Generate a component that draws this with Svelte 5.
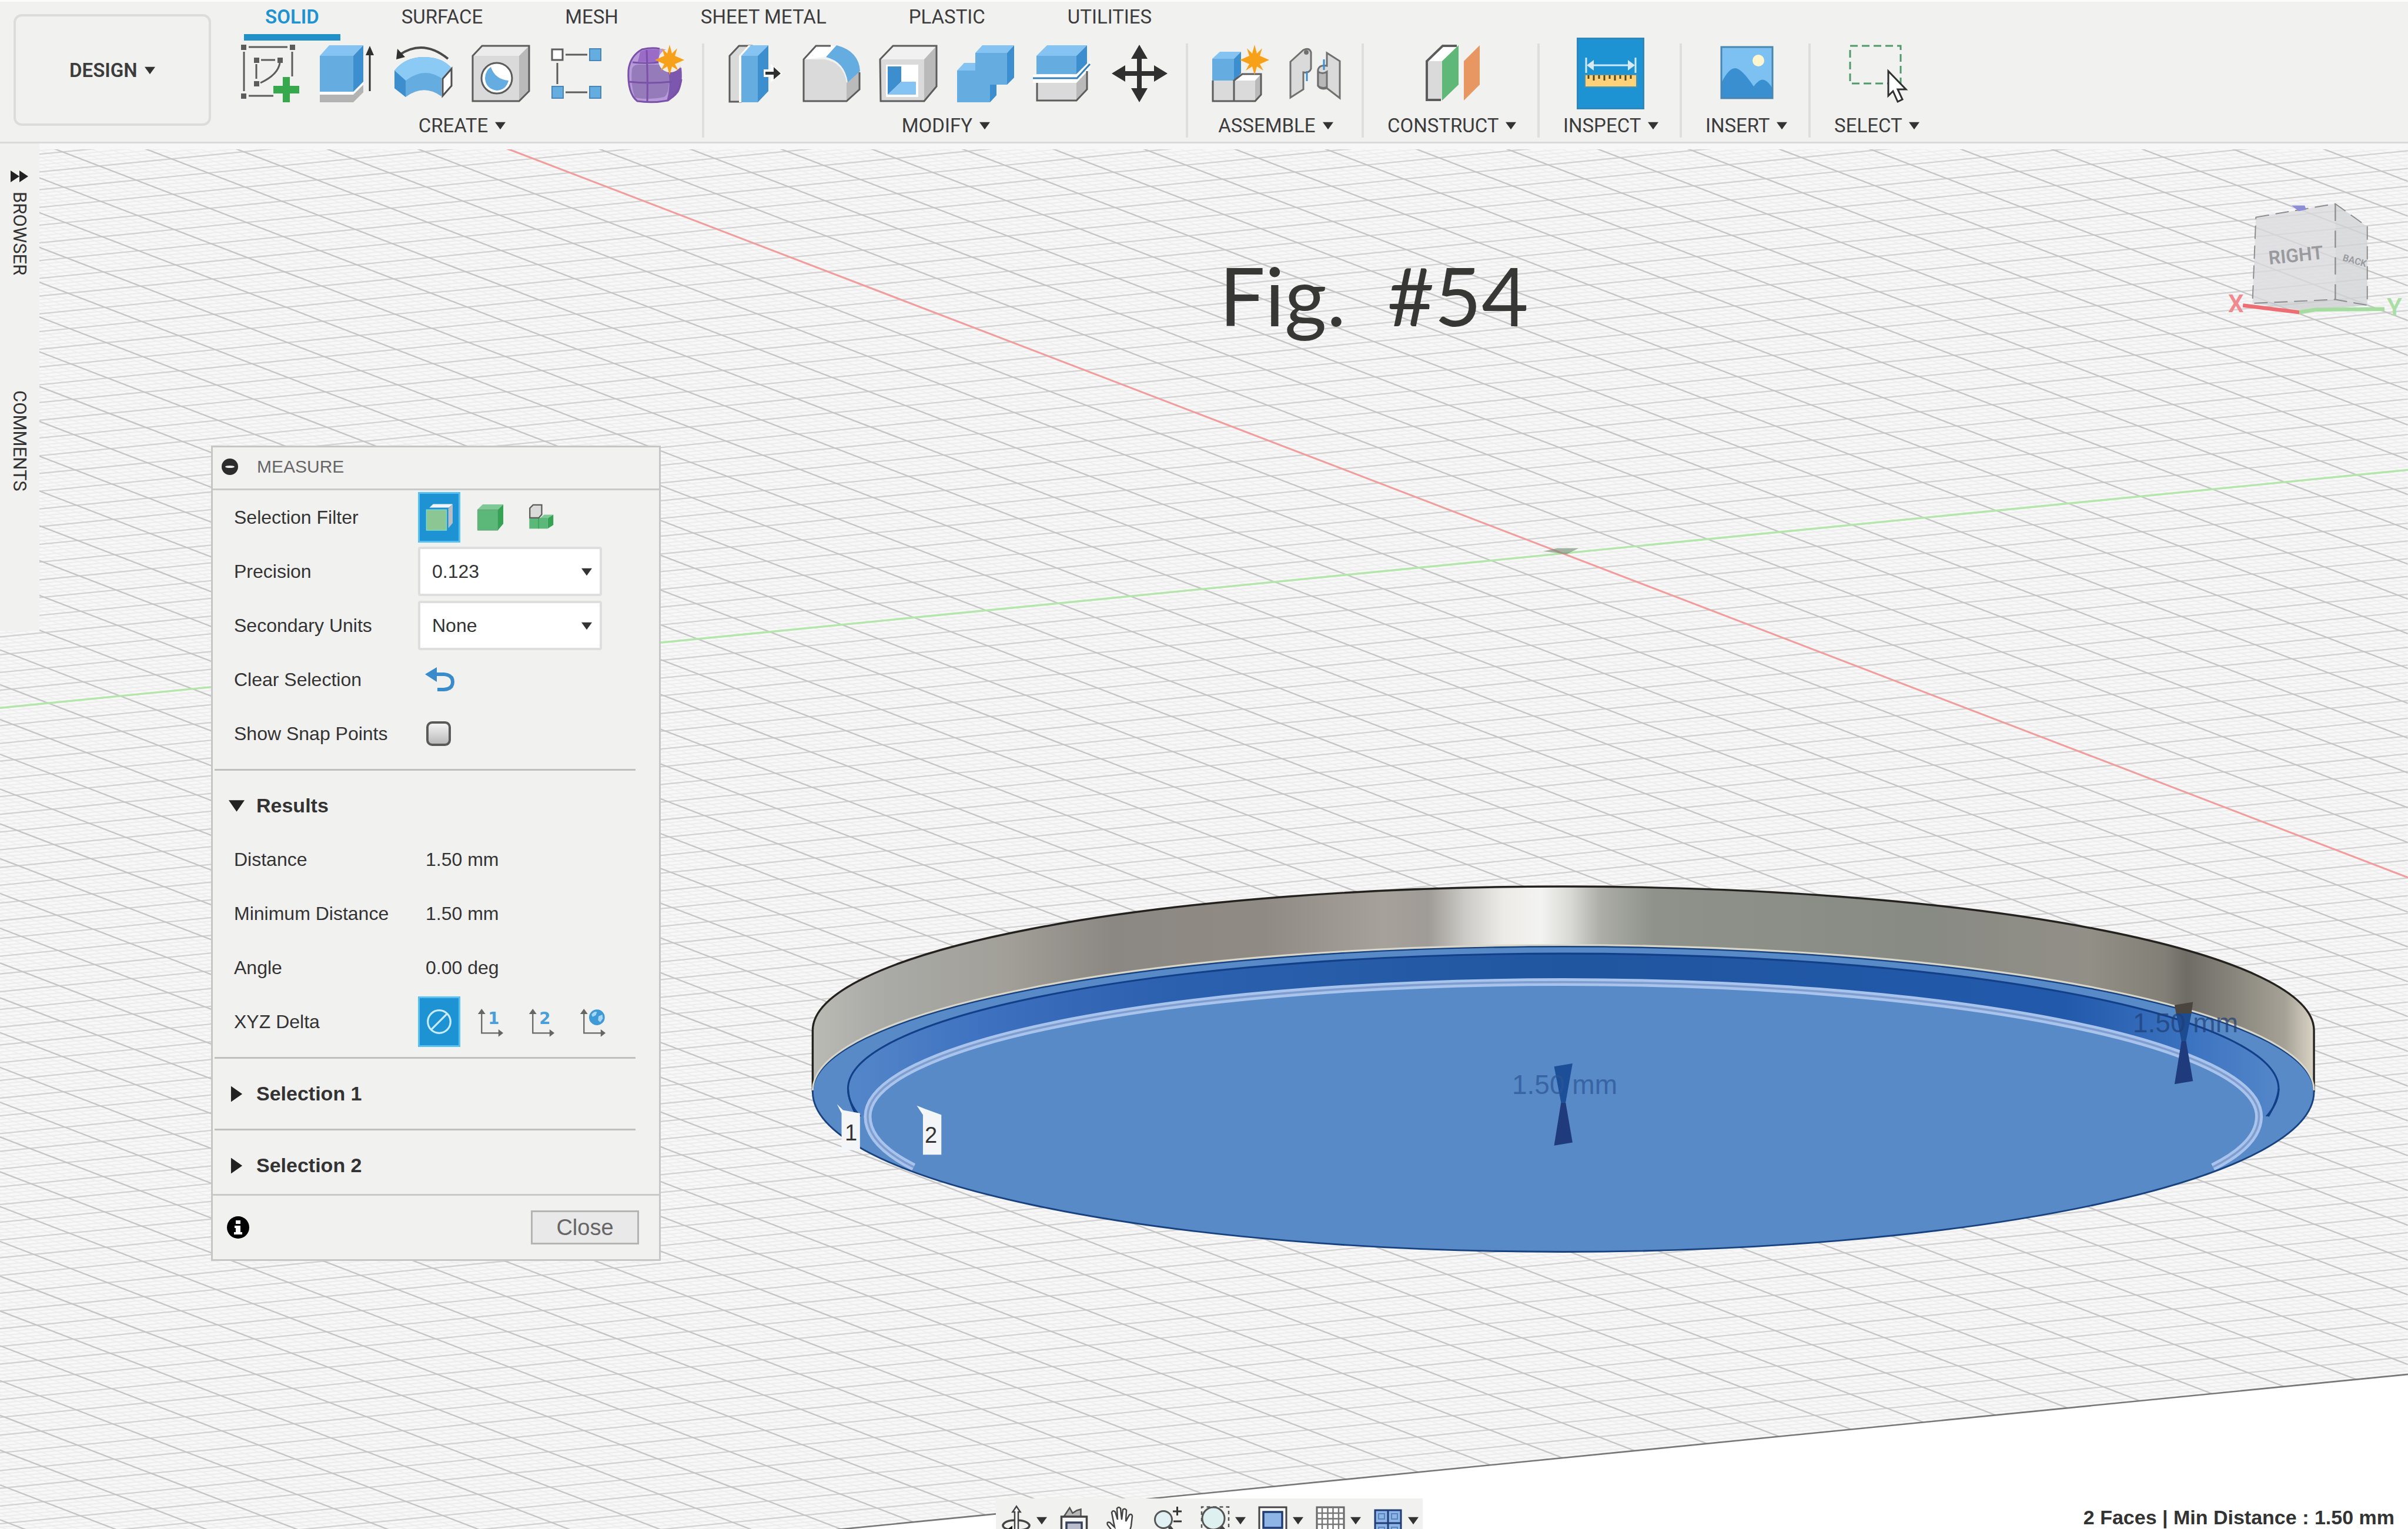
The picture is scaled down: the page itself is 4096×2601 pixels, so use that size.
<script>
    const tabs = ['SOLID', 'SURFACE', 'MESH', 'SHEET METAL', 'PLASTIC', 'UTILITIES'];

    const groups = [
        { name: 'CREATE', tools: ['sketch', 'extrude', 'revolve', 'hole', 'pattern', 'form'] },
        { name: 'MODIFY', tools: ['presspull', 'fillet', 'shell', 'combine', 'split', 'move'] },
        { name: 'ASSEMBLE', tools: ['component', 'joint'] },
        { name: 'CONSTRUCT', tools: ['plane'] },
        { name: 'INSPECT', tools: ['measure'] },
        { name: 'INSERT', tools: ['image'] },
        { name: 'SELECT', tools: ['select'] }
    ];

    const filters = ['face', 'body', 'part'];
    const deltas = ['none', 'first', 'second', 'world'];
    const results = [
        ['Distance', '1.50 mm'],
        ['Minimum Distance', '1.50 mm'],
        ['Angle', '0.00 deg']
    ];
    const navTools = [
        { name: 'orbit', menu: true },
        { name: 'look', menu: false },
        { name: 'pan', menu: false },
        { name: 'zoom', menu: false },
        { name: 'fit', menu: true },
        { name: 'display', menu: true },
        { name: 'grid', menu: true },
        { name: 'views', menu: true }
    ];

    let activeTab = 'SOLID';
    let activeTool = 'measure';
    let filter = 'face';
    let delta = 'none';
    let precision = '0.123';
    let units = 'None';
    let snapPoints = false;
    let open = { results: true, one: false, two: false };

    // parallel lines across the scene: y = start + slope * x, every 'step'
    function lines(start, slope, step, from, to, skip) {
        let d = '';
        for (let i = from; i <= to; i++) {
            if (skip && i % skip === 0) continue;
            const y = start + i * step;
            d += `M0 ${y.toFixed(2)}L1568 ${(y + slope * 1568).toFixed(2)}`;
        }
        return d;
    }

    const majorX = lines(-30, 0.3835, 22.66, -24, 48);
    const minorX = lines(-30, 0.3835, 4.532, -120, 240, 5);
    const majorY = lines(461, -0.0988, 11.55, -32, 51);
    const minorY = lines(461, -0.0988, 2.31, -160, 255, 5);

    // half ellipses meeting at cy, flatter at the back than at the front
    function disc(rx, cy, back, front) {
        return `M${1018 - rx} ${cy}A${rx} ${back} 0 0 1 ${1018 + rx} ${cy}A${rx} ${front} 0 0 1 ${1018 - rx} ${cy}Z`;
    }

    const rim = disc(488.8, 711, 94.6, 104.2);
    const lip = disc(465.8, 709, 88, 98);
    const plate = disc(453, 727, 87.5, 98);
    const side = 'M529.2 711V671A488.8 93.7 0 0 1 1506.8 671V711A488.8 94.6 0 0 0 529.2 711Z';
</script>

{#snippet caret()}
    <svg class="caret" viewBox="0 0 20 14" aria-hidden="true"><path d="M0 0h20L10 14z" /></svg>
{/snippet}

{#snippet star(x, y)}
    <path
        transform="translate({x} {y})"
        fill="#f7a11b"
        d="M0-26L4-11 13-20 9-7 25 0 9 7 15 18 4 11 0 26-4 11-15 18-9 7-25 0-9-7-13-20-4-11z"
    />
{/snippet}

{#snippet icon(name)}
    <svg class="icon" viewBox="0 0 100 100" aria-hidden="true">
        {#if name === 'sketch'}
            <g stroke="#5c5c5c" stroke-width="3" fill="none">
                <path d="M14 5h66M14 88h42M6 13v67M88 13v42M35 27h24M27 34v25M67 32Q64 52 34 66" />
            </g>
            <path fill="#5c5c5c" d="M1 1h9v9H1zM84 1h9v9h-9zM1 84h9v9H1zM23 23h9v9h-9zM63 23h9v9h-9zM23 63h9v9h-9z" />
            <path fill="#35a94c" d="M72 56h12v15h16v13H84v15H72V84H56V71h16z" />
        {:else if name === 'extrude'}
            <path fill="#b3b3b3" d="M4 85h57l17-16v13L61 99H4z" />
            <path fill="#fff" d="M4 81h57l17-17v5L61 86H4z" />
            <path fill="#85c4f2" d="M4 20L20 2h58L61 20z" />
            <path fill="#65ace1" d="M4 20h57v61H4z" />
            <path fill="#3c8ecf" d="M61 20L78 2v62L61 81z" />
            <path stroke="#303030" stroke-width="3" d="M89 80V14" />
            <path fill="#303030" d="M89 3l7 16H82z" />
        {:else if name === 'revolve'}
            <path fill="none" stroke="#4a4a4a" stroke-width="4" d="M9 18Q49-9 91 25" />
            <path fill="#303030" d="M3 26L5 8l13 14z" />
            <path fill="#65ace1" d="M0 45Q18 22 50 22T98 42L80 58V89Q50 67 19 90L0 75z" />
            <path fill="#8acaf5" d="M0 45Q18 22 50 22T98 42L80 58Q50 38 19 62z" />
            <path fill="#3c8ecf" d="M0 45l19 17v28L0 75z" />
            <path fill="#fff" stroke="#505050" stroke-width="3" d="M82 59l15-17v29L82 88z" />
        {:else if name === 'hole'}
            <path fill="#ececec" d="M2 20L18 2h81L81 20z" />
            <path fill="#dadada" d="M2 20h79v78H2z" />
            <path fill="#bababa" d="M81 20L99 2v78L81 98z" />
            <path fill="none" stroke="#5c5c5c" stroke-width="3" d="M2 20L18 3h80v77L81 97H2z" />
            <circle cx="43" cy="58" r="26" fill="#fff" stroke="#5c5c5c" stroke-width="3" />
            <path fill="#65ace1" d="M33 39Q40 60 63 62Q59 78 43 79Q24 76 23 58Q24 44 33 39z" />
        {:else if name === 'pattern'}
            <path stroke="#5c5c5c" stroke-width="3" d="M29 18h37M29 82h37M15 32v36" />
            <path fill="#fff" stroke="#5c5c5c" stroke-width="3" d="M6 9h18v18H6z" />
            <path fill="#65ace1" stroke="#4a86b5" stroke-width="2" d="M70 8h19v20H70zM6 72h19v20H6zM70 72h19v20H70z" />
        {:else if name === 'form'}
            <path fill="#b79ad9" d="M5 44Q8 20 28 9Q55 4 78 12Q96 24 95 60Q94 84 72 96Q45 102 20 97Q4 84 5 62z" />
            <path fill="#7d56ae" d="M72 45Q88 44 95 40Q98 68 90 82Q82 93 70 97Q78 70 72 45z" />
            <path fill="#967bbb" d="M11 42Q14 34 22 35H66Q74 40 74 62T66 90Q40 96 16 91Q8 70 11 42z" />
            <path fill="#9a6cc7" d="M25 13Q38 7 58 10L56 30H21z" />
            <path fill="none" stroke="#7a50a8" stroke-width="3" d="M5 44Q8 20 28 9Q46 5 58 8M5 44Q3 84 20 97Q45 101 72 96Q92 82 95 60M36 10Q38 60 37 97M6 64Q40 68 78 64M12 31Q40 34 62 30" />
            <circle cx="76" cy="28" r="20" fill="#f5eee0" />
            {@render star(75, 27)}
        {:else if name === 'presspull'}
            <path fill="#dadada" stroke="#5c5c5c" stroke-width="3" d="M9 98V20L25 3h20L28 20v78z" />
            <path fill="#fff" d="M25 20L41 2h6v97H25z" />
            <path fill="#85c4f2" d="M29 20L45 2h30L57 20z" />
            <path fill="#65ace1" d="M29 20h28v79H29z" />
            <path fill="#3c8ecf" d="M57 20L75 2v78L57 99z" />
            <path fill="#fff" d="M67 43h12v-9l20 16-20 15v-9H67z" />
            <path fill="#303030" d="M70 47h14v-8l12 11-12 10v-8H70z" />
        {:else if name === 'fillet'}
            <path fill="#fff" d="M4 26L25 3h34L42 22z" />
            <path fill="#bababa" d="M77 66L99 46v32L77 98z" />
            <path fill="#dadada" d="M4 26h36Q72 32 77 66v32H4z" />
            <path fill="none" stroke="#5c5c5c" stroke-width="3" d="M50 3H25L4 26v71h73l22-20V48" />
            <path fill="#65ace1" d="M42 22L60 2Q98 12 100 46L79 65Q74 30 42 22z" />
        {:else if name === 'shell'}
            <path fill="#f1f1f1" d="M3 26L25 2h75L78 26z" />
            <path fill="#dadada" d="M3 26h75v72H3z" />
            <path fill="#bababa" d="M78 26L100 2v70L78 98z" />
            <path fill="none" stroke="#5c5c5c" stroke-width="3" d="M3 26L25 3h74v69L78 97H4z" />
            <path fill="#fff" d="M13 35h55v55H13z" />
            <path fill="#3c8ecf" d="M16 38h23v26L16 86z" />
            <path fill="#85c4f2" d="M39 64h25v22H16z" />
        {:else if name === 'combine'}
            <path fill="#65ace1" d="M3 45h31V15h54v54H59v30H3z" />
            <path fill="#85c4f2" d="M3 45l12-13h19v13zM34 15L46 2h54L88 15z" />
            <path fill="#3c8ecf" d="M88 15l12-13v55L88 69zM59 69h11v18L59 99z" />
        {:else if name === 'split'}
            <path fill="#85c4f2" d="M7 20L25 2h68L75 20z" />
            <path fill="#65ace1" d="M7 20h68v31H7z" />
            <path fill="#3c8ecf" d="M75 20L93 2v31L75 51z" />
            <path fill="#fff" d="M1 52h74l24-24v12L77 66H1z" />
            <path fill="none" stroke="#3580ba" stroke-width="3" d="M1 58h75l22-24" />
            <path fill="#dadada" d="M8 66h67v30H8z" />
            <path fill="#bababa" d="M75 66l18-19v30L75 96z" />
            <path fill="none" stroke="#5c5c5c" stroke-width="3" d="M8 66v30h67l18-19V46" />
        {:else if name === 'move'}
            <path fill="#303030" d="M51 1l14 24H55v21h21V36l23 14-23 14V54H55v21h10L51 99 37 75h10V54H27v10L4 50l23-14v10h20V25H37z" />
        {:else if name === 'component'}
            <path fill="#85c4f2" d="M7 25L20 13h36L44 25z" />
            <path fill="#65ace1" d="M7 25h37v37H7z" />
            <path fill="#3c8ecf" d="M44 25l12-12v37L44 62z" />
            <path fill="#dadada" d="M7 62h37v36H7zM44 62h36v36H44z" />
            <path fill="#fff" d="M44 62l12-12h35L80 62z" />
            <path fill="#bababa" d="M80 62l11-12v37L80 98z" />
            <path fill="none" stroke="#5c5c5c" stroke-width="3" d="M8 62v35h72l10-11V51H58L44 62v35" />
            <circle cx="80" cy="28" r="18" fill="#f5eee0" />
            {@render star(79, 27)}
        {:else if name === 'joint'}
            <g fill="#dadada" stroke="#707070" stroke-width="3">
                <path d="M9 30L31 10q10-5 13 4v28q-3 8-13 6v29L9 91z" />
                <path d="M93 29L71 15v22q-12-2-15 6v28q4 7 15 4l22 17z" />
                <path fill="#b8b8b8" d="M56 47q8 5 15 0v26q-9 4-15-2z" />
            </g>
            <circle cx="36" cy="14" r="4" fill="#707070" />
            <path stroke="#3c8ecf" stroke-width="3" d="M37 46v17M66 26v18" />
        {:else if name === 'plane'}
            <path fill="#fff" d="M7 29L34 3h26L33 29z" />
            <path fill="#dadada" d="M7 29h26v66H7z" />
            <path fill="none" stroke="#5c5c5c" stroke-width="4" d="M58 3H34L7 29v66h24" />
            <path fill="#5fb878" d="M33 29L61 2v67L33 96z" />
            <path fill="#e89762" d="M70 29L97 2v67L70 96z" />
        {:else if name === 'measure'}
            <path stroke="#cfe9f8" stroke-width="3" d="M8 23v26M92 23v26M14 36h72" />
            <path fill="#d9e9f2" d="M9 36l12-9v18zM91 36l-12-9v18z" />
            <path fill="#ffd27a" stroke="#4d92ab" stroke-width="2" d="M6 52h88v21H6z" />
            <path stroke="#50481f" stroke-width="3" d="M12 53v6M21 53v9M30 53v6M39 53v9M48 53v6M57 53v9M66 53v6M75 53v9M84 53v6" />
        {:else if name === 'image'}
            <path fill="#7dc1f2" d="M6 4h89v89H6z" />
            <circle cx="70" cy="28" r="10" fill="#fff6cf" />
            <path fill="#3a8fd0" d="M7 66Q20 40 31 41T62 72Q72 58 80 61T94 76V92H7z" />
            <path fill="none" stroke="#4a86ad" stroke-width="3" d="M7 5h87v87H7z" />
        {:else if name === 'select'}
            <path fill="none" stroke="#4f9a68" stroke-width="3" stroke-dasharray="13 7" d="M4 3h86v64H4z" />
            <path fill="#fff" stroke="#303030" stroke-width="3" d="M69 46v42l8-8 8 18 8-4-8-17h14z" />
        {:else if name === 'face'}
            <path fill="#f2f4f5" d="M14 14L28 1h72L86 14z" />
            <path fill="#b9bec4" d="M84 18L100 1v70L84 90z" />
            <path fill="#8cc693" stroke="#7edbd0" stroke-width="3" d="M3 22h74v76H3z" />
        {:else if name === 'body'}
            <path fill="#7fc997" d="M2 22L22 2h76L78 22z" />
            <path fill="#5cb878" stroke="#6a9e78" stroke-width="2" d="M3 22h75v76H3z" />
            <path fill="#35a353" d="M78 22L98 2v72L78 98z" />
        {:else if name === 'part'}
            <path fill="#5cb878" d="M5 52h68v40H5z" />
            <path fill="#7fc997" d="M46 52l14-12h34L76 52z" />
            <path fill="#35a353" d="M73 54l21-14v38L73 92zM38 52h3v40h-3z" />
            <path fill="#dadada" stroke="#5c5c5c" stroke-width="5" d="M7 52V16L19 4h32v36L40 52z" />
        {:else if name === 'none'}
            <circle cx="50" cy="50" r="42" fill="none" stroke="#c9ecfa" stroke-width="7" />
            <path stroke="#c9ecfa" stroke-width="7" d="M21 79l58-58" />
        {:else if name === 'orbit'}
            <path fill="none" stroke="#444" stroke-width="7" d="M36 84Q2 80 4 66Q12 50 48 50T94 66Q96 82 56 84" />
            <path fill="#fff" stroke="#444" stroke-width="5" d="M44 99V22h-7L50 3l13 19h-7v77z" />
            <path fill="#111" d="M14 84l22-15v30z" />
        {:else if name === 'look'}
            <path fill="#b8b8b8" stroke="#555" stroke-width="5" d="M15 38L35 8l10 18 14-9 14-4v25z" />
            <path fill="#f7f7f7" stroke="#444" stroke-width="7" d="M7 38h86v60H7z" />
            <path fill="#b9bccb" stroke="#39415c" stroke-width="7" d="M24 58h52v40H24z" />
        {:else if name === 'pan'}
            <path fill="#fff" stroke="#444" stroke-width="5" d="M30 99L4 66q-4-12 8-8l16 16-10-50q4-10 12-2l8 26-2-38q6-8 12 0l4 38 4-34q7-6 12 2l-2 38 12-22q8-5 10 4L84 70l-8 29z" />
        {:else if name === 'zoom'}
            <circle cx="34" cy="48" r="29" fill="#e0f0f3" stroke="#555" stroke-width="6" />
            <path stroke="#444" stroke-width="12" d="M54 72l20 26" />
            <path stroke="#333" stroke-width="6" d="M66 20h30M81 4v30M68 54h28" />
        {:else if name === 'fit'}
            <path fill="none" stroke="#555" stroke-width="5" stroke-dasharray="12 10" d="M4 98V5h92v93" />
            <circle cx="44" cy="44" r="38" fill="#dff0f1" stroke="#555" stroke-width="6" />
            <path stroke="#444" stroke-width="14" d="M70 74l20 24" />
        {:else if name === 'display'}
            <path fill="#fff" stroke="#444" stroke-width="6" d="M4 6h92v84H4z" />
            <path fill="#8fb5e6" stroke="#1f3c74" stroke-width="7" d="M18 22h64v54H18z" />
            <path fill="#333" d="M34 90h32v9H34z" />
        {:else if name === 'grid'}
            <path fill="#fff" stroke="#666" stroke-width="6" d="M4 6h92v92H4z" />
            <path fill="none" stroke="#777" stroke-width="5" d="M22 6v92M41 6v92M59 6v92M78 6v92M4 26h92M4 45h92M4 64h92M4 83h92" />
        {:else if name === 'views'}
            <path fill="#8fb5e6" stroke="#1f3c74" stroke-width="6" d="M6 16h88v82H6z" />
            <path fill="none" stroke="#5684c0" stroke-width="4" d="M18 28h20v18H18zM62 28h20v18H62zM18 74h20v18H18zM62 74h20v18H62z" />
            <path stroke="#1f3c74" stroke-width="6" d="M50 16v82M6 60h88" />
        {:else}
            <path fill="none" stroke="#666" stroke-width="5" d="M18 14v78h70" />
            <path fill="#666" d="M18 2l14 20H4zM98 92L80 78v28z" />
            {#if name === 'world'}
                <circle cx="66" cy="34" r="29" fill="#3f9ad6" />
                <path fill="#a9d6f2" d="M46 24q10-14 20-10l-4 12-12 6zM72 30l14-6 2 14-10 14-8-8z" />
            {:else}
                <text x="42" y="58" class="axis-number">{name === 'first' ? 1 : 2}</text>
            {/if}
        {/if}
    </svg>
{/snippet}

<div class="app">
    <svg class="scene" viewBox="0 0 4096 2601" role="img" aria-label="Model view">
        <defs>
            <linearGradient id="metal" gradientUnits="userSpaceOnUse" x1="529" y1="0" x2="1507" y2="0">
                <stop offset="0" stop-color="#b9bab3" />
                <stop offset="0.05" stop-color="#a9aaa6" />
                <stop offset="0.13" stop-color="#a19f98" />
                <stop offset="0.2" stop-color="#8b8883" />
                <stop offset="0.3" stop-color="#908a84" />
                <stop offset="0.38" stop-color="#a6a19b" />
                <stop offset="0.41" stop-color="#9f9b96" />
                <stop offset="0.435" stop-color="#cdcbc7" />
                <stop offset="0.46" stop-color="#ecebe8" />
                <stop offset="0.485" stop-color="#f3f3f1" />
                <stop offset="0.505" stop-color="#d8d8d4" />
                <stop offset="0.525" stop-color="#acada7" />
                <stop offset="0.56" stop-color="#8f918b" />
                <stop offset="0.74" stop-color="#888a84" />
                <stop offset="0.85" stop-color="#928f87" />
                <stop offset="0.9" stop-color="#827f77" />
                <stop offset="0.915" stop-color="#6f6c66" />
                <stop offset="0.94" stop-color="#828077" />
                <stop offset="0.98" stop-color="#a5a196" />
                <stop offset="1" stop-color="#dad4c5" />
            </linearGradient>
            <linearGradient id="wall" gradientUnits="userSpaceOnUse" x1="552" y1="0" x2="1484" y2="0">
                <stop offset="0" stop-color="#5487c9" />
                <stop offset="0.1" stop-color="#3d70bf" />
                <stop offset="0.22" stop-color="#2c61b0" />
                <stop offset="0.5" stop-color="#20569f" />
                <stop offset="0.85" stop-color="#2259ab" />
                <stop offset="0.94" stop-color="#3d74c1" />
                <stop offset="1" stop-color="#5487c9" />
            </linearGradient>
            <clipPath id="ground"><path d="M0 0H1568V895L0 1050z" /></clipPath>
            <clipPath id="rim"><path d={rim} /></clipPath>
        </defs>

        <g transform="scale(2.6122)">
            <rect width="1568" height="996" fill="#fff" />
            <g clip-path="url(#ground)" fill="none">
                <rect width="1568" height="996" fill="#f8f8f8" />
                <path d={minorX} stroke="#f0f0f0" stroke-width="0.8" />
                <path d={minorY} stroke="#ededed" stroke-width="0.8" />
                <path d={majorY} stroke="#d2d2d2" stroke-width="0.9" />
                <path d={majorX} stroke="#c5c5c5" stroke-width="0.9" />
            </g>
            <path d="M0 1050L1568 895" stroke="#777" />
            <path d="M0 461L1568 306" stroke="#b4e6ac" stroke-width="1.3" />
            <path d="M255 68L1568 571.5" stroke="#f59b9b" stroke-width="1.1" />
            <path d="M1005 359l9-2 14 0-8 4z" fill="#6f8a6f" opacity="0.6" />

            <path d={side} fill="url(#metal)" />
            <path d="M529.2 711V671A488.8 93.7 0 0 1 1506.8 671V711" fill="none" stroke="#24221f" stroke-width="1.3" />
            <path d={rim} fill="#588ac8" />
            <g clip-path="url(#rim)" fill="none">
                <path d={lip} fill="url(#wall)" stroke="#123f87" stroke-width="1.2" />
                <path d="M545 727H1491V830H545z" fill="#588ac8" />
                <path d="M552.2 709Q552.5 717 558 727M1483.8 709Q1483 717 1477 727" stroke="#123f87" stroke-width="1.2" />
                <path d={plate} fill="#588ac8" />
                <path d="M595 760Q565 745 565 727A453 87.5 0 0 1 1471 727Q1471 745 1441 760" stroke="#a9c4ec" stroke-width="5" />
                <path d="M595 760Q565 745 565 727A453 87.5 0 0 1 1471 727Q1471 745 1441 760" stroke="#7f9dcf" stroke-width="1.4" />
            </g>
            <path d={rim} fill="none" stroke="#17427f" stroke-width="1.1" />
            <path d="M529.2 710A488.8 94.6 0 0 1 1506.8 710" fill="none" stroke="#d8d6c9" stroke-width="1.2" />

            <path d="M1012 694.5L1024 692.5 1019.5 718H1016.5z" fill="#1c4f98" />
            <path d="M1016.5 718H1019.5L1024 744 1012 746z" fill="#1f3b7b" />
            <path d="M1416 654.5L1428 652.5 1427 660H1417z" fill="#4a463f" />
            <path d="M1417 660H1427L1423.5 678H1420.5z" fill="#1c4b90" />
            <path d="M1420.5 678H1423.5L1428 704 1416 706z" fill="#1f3b7b" />

            <path d="M545 719l4 4 11 2v24h-12v-24z" fill="#f4f5f7" />
            <path d="M597 720l5 2 11 4v26h-12v-26z" fill="#f4f5f7" />
        </g>

        <text class="caption" x="2074" y="555">Fig.&nbsp; #54</text>
        <text class="dimension" x="2572" y="1861">1.50 mm</text>
        <text class="dimension dark" x="3628" y="1756">1.50 mm</text>
        <text class="flag" x="1437" y="1940">1</text>
        <text class="flag" x="1573" y="1944">2</text>

        <!-- view cube -->
        <g transform="translate(3711 312.5) scale(0.3255)" fill="none">
            <path d="M388 175L803 105V605L370 625z" fill="#d9dade" opacity="0.75" />
            <path d="M803 105L970 225V635L803 605z" fill="#d2d3d6" opacity="0.75" />
            <path d="M370 625L803 605 980 635 650 665z" fill="#c9cacd" opacity="0.7" />
            <path d="M388 175L803 105 970 225V635L803 605 370 625z" stroke="#8c8c8c" stroke-width="6" stroke-dasharray="70 34" />
            <path d="M803 105V605" stroke="#8c8c8c" stroke-width="7" stroke-dasharray="90 50" />
            <path d="M575 114l68 0 8 22-40 8z" fill="#8d8ed6" />
            <path d="M320 636L615 672" stroke="#ee6d72" stroke-width="20" />
            <path d="M615 672L700 658 1060 655" stroke="#a5dca0" stroke-width="20" />
        </g>
        <text class="cube" transform="translate(3860 450) rotate(-6)">RIGHT</text>
        <text class="cube back" transform="translate(3984 443) rotate(16)">BACK</text>
        <text class="axis x" x="3790" y="531">X</text>
        <text class="axis y" x="4060" y="537">Y</text>
    </svg>

    <header class="toolbar">
        <button class="workspace">DESIGN {@render caret()}</button>
        <div class="ribbon">
            <nav class="tabs">
                {#each tabs as tab}
                    <button class="tab" class:active={tab === activeTab} on:click={() => (activeTab = tab)}>{tab}</button>
                {/each}
            </nav>
            <div class="groups">
                {#each groups as group}
                    <div class="group" class:single={group.tools.length === 1}>
                        <div class="tools">
                            {#each group.tools as tool}
                                <button
                                    class="tool"
                                    class:active={tool === activeTool}
                                    aria-label={tool}
                                    on:click={() => (activeTool = tool)}
                                >
                                    {@render icon(tool)}
                                </button>
                            {/each}
                        </div>
                        <button class="group-name">{group.name} {@render caret()}</button>
                    </div>
                {/each}
            </div>
        </div>
    </header>

    <aside class="sidebar">
        <button class="expand" aria-label="Expand">
            <svg viewBox="0 0 30 20" aria-hidden="true"><path d="M0 0l15 10L0 20zM15 0l15 10-15 10z" /></svg>
        </button>
        <button class="side-tab">BROWSER</button>
        <button class="side-tab">COMMENTS</button>
    </aside>

    <section class="panel">
        <header class="panel-header">
            <button class="collapse" aria-label="Collapse"></button>
            <h2>MEASURE</h2>
        </header>

        <div class="row">
            <span class="label">Selection Filter</span>
            <div class="choices">
                {#each filters as name}
                    <button class="choice" class:active={name === filter} aria-label={name} on:click={() => (filter = name)}>
                        {@render icon(name)}
                    </button>
                {/each}
            </div>
        </div>
        <div class="row">
            <label class="label" for="precision">Precision</label>
            <div class="select">
                <select id="precision" bind:value={precision}>
                    <option>0.123</option>
                    <option>0.12</option>
                </select>
                {@render caret()}
            </div>
        </div>
        <div class="row">
            <label class="label" for="units">Secondary Units</label>
            <div class="select">
                <select id="units" bind:value={units}>
                    <option>None</option>
                    <option>Inch</option>
                </select>
                {@render caret()}
            </div>
        </div>
        <div class="row">
            <label class="label" for="clear">Clear Selection</label>
            <button id="clear" class="clear" aria-label="Clear Selection">
                <svg viewBox="0 0 50 42" aria-hidden="true">
                    <path fill="none" stroke="#3a8bcb" stroke-width="6" d="M14 12h18q15 1 15 13t-15 13H21" />
                    <path fill="#3a8bcb" d="M0 12L20 0v25z" />
                </svg>
            </button>
        </div>
        <div class="row">
            <label class="label" for="snap">Show Snap Points</label>
            <input id="snap" type="checkbox" bind:checked={snapPoints} />
        </div>

        <div class="section">
            <button class="section-name" on:click={() => (open.results = !open.results)}>
                <svg class="arrow" class:closed={!open.results} viewBox="0 0 28 20" aria-hidden="true"><path d="M0 0h28L14 20z" /></svg>
                Results
            </button>
            {#if open.results}
                {#each results as [name, value]}
                    <div class="row">
                        <span class="label">{name}</span>
                        <span class="value">{value}</span>
                    </div>
                {/each}
                <div class="row">
                    <span class="label">XYZ Delta</span>
                    <div class="choices">
                        {#each deltas as name}
                            <button class="choice" class:active={name === delta} aria-label={name} on:click={() => (delta = name)}>
                                {@render icon(name)}
                            </button>
                        {/each}
                    </div>
                </div>
            {/if}
        </div>
        <div class="section">
            <button class="section-name" on:click={() => (open.one = !open.one)}>
                <svg class="arrow" class:closed={!open.one} viewBox="0 0 28 20" aria-hidden="true"><path d="M0 0h28L14 20z" /></svg>
                Selection 1
            </button>
        </div>
        <div class="section">
            <button class="section-name" on:click={() => (open.two = !open.two)}>
                <svg class="arrow" class:closed={!open.two} viewBox="0 0 28 20" aria-hidden="true"><path d="M0 0h28L14 20z" /></svg>
                Selection 2
            </button>
        </div>

        <footer class="panel-footer">
            <svg class="info" viewBox="0 0 38 38" aria-hidden="true">
                <circle cx="19" cy="19" r="19" />
                <path fill="#fff" d="M15 7h8v6h-8zM13 16h10v11h3v4H12v-4h3v-7h-2z" />
            </svg>
            <button class="close">Close</button>
        </footer>
    </section>

    <footer class="status">
        <div class="nav-bar">
            {#each navTools as tool}
                <button class="nav-tool" aria-label={tool.name}>
                    {@render icon(tool.name)}
                    {#if tool.menu}{@render caret()}{/if}
                </button>
            {/each}
        </div>
        <p class="summary">2 Faces | Min Distance : 1.50 mm</p>
    </footer>
</div>

<style>
    :global(body) {
        margin: 0;
    }

    button {
        background: none;
        border: none;
        padding: 0;
        margin: 0;
        color: inherit;
        font: inherit;
        cursor: pointer;
    }

    .app {
        position: relative;
        min-height: 100vh;
        overflow: hidden;
        background: white;
        color: #333;
        font-family: "Liberation Sans", Arial, sans-serif;
        font-size: 32px;
    }

    .scene {
        position: absolute;
        top: 0;
        left: 0;
        width: 100%;
        height: auto;
    }

    .scene text {
        font-family: "Liberation Sans", Arial, sans-serif;
    }

    .scene .caption {
        font-family: Lato, sans-serif;
        font-size: 138px;
        fill: #373736;
        white-space: pre;
    }

    .scene .dimension {
        font-size: 46px;
        fill: #2b5596;
        opacity: 0.7;
    }

    .scene .dimension.dark {
        fill: #1e3f76;
    }

    .scene .flag {
        font-size: 38px;
        fill: #333;
    }

    .scene .cube {
        font-family: Roboto, sans-serif;
        font-size: 32px;
        font-weight: 600;
        fill: #999a9e;
    }

    .scene .cube.back {
        font-size: 16px;
    }

    .scene .axis {
        font-family: Roboto, sans-serif;
        font-size: 42px;
        font-weight: 600;
    }

    .scene .axis.x {
        fill: #f08a8e;
    }

    .scene .axis.y {
        fill: #a9dfa5;
    }

    .toolbar {
        position: relative;
        display: flex;
        height: 244px;
        box-sizing: border-box;
        background: #f1f1f0;
        border-top: 3px solid #fcfcfc;
        border-bottom: 3px solid #dadada;
        box-shadow: 0 10px 0 #f7f7f7;
        font-family: Roboto, sans-serif;
        font-size: 33px;
        color: #3c3c3c;
    }

    .workspace {
        flex: none;
        width: 336px;
        height: 190px;
        margin: 21px 16px 0 23px;
        border: 4px solid #dcdcdc;
        border-radius: 14px;
        font-weight: 600;
    }

    .caret {
        width: 18px;
        height: 14px;
        margin-left: 4px;
        fill: #333;
        vertical-align: 4px;
    }

    .ribbon {
        flex: 1;
    }

    .tabs {
        display: flex;
        gap: 68px;
        height: 61px;
        padding-left: 40px;
    }

    .tab {
        position: relative;
        height: 50px;
        padding: 0 36px;
        white-space: nowrap;
    }

    .tab.active {
        color: #1f93d1;
        font-weight: 600;
    }

    .tab.active::after {
        content: '';
        position: absolute;
        left: 0;
        right: 0;
        top: 55px;
        height: 11px;
        background: #2190c8;
    }

    .groups {
        display: flex;
    }

    .group {
        position: relative;
        display: flex;
        flex-direction: column;
        align-items: center;
        padding: 0 27px 0 26px;
    }

    .group.single {
        padding: 0 40px;
    }

    .group:not(:last-child)::after {
        content: '';
        position: absolute;
        right: 0;
        top: 10px;
        width: 4px;
        height: 160px;
        background: #dedede;
    }

    .tools {
        display: flex;
        gap: 16px;
    }

    .tool {
        display: flex;
        align-items: center;
        justify-content: center;
        width: 115px;
        height: 122px;
    }

    .tool.active {
        background: #1e93d4;
        box-shadow: inset 0 0 0 3px #2e87b8;
    }

    .icon {
        display: block;
        flex: none;
        width: 100px;
        height: 100px;
        overflow: visible;
    }

    .group-name {
        line-height: 56px;
        white-space: nowrap;
    }

    .sidebar {
        position: relative;
        display: flex;
        flex-direction: column;
        align-items: center;
        width: 67px;
        height: 829px;
        box-sizing: border-box;
        padding: 46px 2px 0 0;
        background: #f1f1f0;
        font-family: Roboto, sans-serif;
        font-size: 31px;
    }

    .expand svg {
        display: block;
        width: 30px;
        height: 20px;
        fill: #222;
    }

    .side-tab {
        width: 36px;
        margin: 16px 0 180px;
        line-height: 36px;
        writing-mode: vertical-rl;
        white-space: nowrap;
    }

    .panel {
        position: absolute;
        top: 758px;
        left: 359px;
        width: 765px;
        box-sizing: border-box;
        background: #f1f1f0;
        border: 3px solid #c6c6c6;
    }

    .panel-header {
        display: flex;
        align-items: center;
        gap: 32px;
        height: 66px;
        padding: 0 0 4px 15px;
        border-bottom: 3px solid #c9c9c9;
    }

    .panel-header h2 {
        margin: 0;
        font-size: 30px;
        font-weight: 400;
        color: #666;
    }

    .collapse {
        width: 28px;
        height: 28px;
        border: 0 solid #2c2c2c;
        border-width: 12px 6px;
        border-radius: 50%;
        background: #eee;
    }

    .row {
        display: flex;
        align-items: center;
        height: 92px;
        padding-left: 36px;
    }

    .label {
        width: 313px;
    }

    .value {
        padding-left: 13px;
    }

    .choices {
        display: flex;
        gap: 15px;
    }

    .choice {
        display: flex;
        align-items: center;
        justify-content: center;
        width: 72px;
        height: 86px;
    }

    .choice.active {
        background: #1e93d4;
        box-shadow: inset 0 0 0 3px #58c0f3;
    }

    .choice .icon {
        width: 46px;
        height: 46px;
    }

    .axis-number {
        font-family: "DejaVu Sans", sans-serif;
        font-size: 60px;
        font-weight: 700;
        fill: #4b9fd8;
    }

    .select {
        position: relative;
        width: 313px;
    }

    .select select {
        appearance: none;
        display: block;
        width: 100%;
        height: 84px;
        padding: 0 20px;
        border: 4px solid #dedede;
        border-radius: 4px;
        background: white;
        color: #333;
        font: inherit;
    }

    .select .caret {
        position: absolute;
        right: 17px;
        top: 36px;
    }

    .clear {
        margin-left: 12px;
    }

    .clear svg {
        display: block;
        width: 50px;
        height: 42px;
    }

    input[type="checkbox"] {
        appearance: none;
        width: 42px;
        height: 42px;
        margin: 0 0 0 14px;
        border: 4px solid #5a5a5a;
        border-radius: 10px;
        background: linear-gradient(#f4f4f4, #b9b9b9);
    }

    .section {
        margin: 14px 40px 0 3px;
        border-top: 3px solid #bfbfbf;
    }

    .section .row {
        padding-left: 33px;
    }

    .section-name {
        display: flex;
        align-items: center;
        width: 100%;
        padding: 14px 0 0 24px;
        line-height: 91px;
        font-size: 34px;
        font-weight: 700;
    }

    .arrow {
        width: 27px;
        height: 20px;
        margin-right: 20px;
        fill: #222;
    }

    .arrow.closed {
        transform: rotate(-90deg);
    }

    .panel-footer {
        display: flex;
        align-items: center;
        justify-content: space-between;
        height: 108px;
        margin-top: 3px;
        padding: 0 34px 0 24px;
        border-top: 3px solid #c9c9c9;
    }

    .info {
        width: 38px;
        height: 38px;
    }

    .close {
        width: 184px;
        height: 58px;
        border: 3px solid #b4b4b4;
        background: #e9e9e9;
        color: #666;
        font-size: 38px;
    }

    .status {
        position: absolute;
        left: 0;
        right: 0;
        bottom: 0;
        display: grid;
        grid-template-columns: 1fr auto 1fr;
        height: 52px;
        padding-left: 18px;
    }

    .nav-bar {
        grid-column: 2;
        display: flex;
        gap: 30px;
        height: 52px;
        box-sizing: border-box;
        padding: 11px 16px 0 10px;
        background: #f1f1f0;
        overflow: hidden;
    }

    .nav-tool {
        display: flex;
        height: 52px;
    }

    .nav-tool .icon {
        width: 50px;
        height: 52px;
    }

    .nav-tool .caret {
        flex: none;
        margin: 20px -9px 0 9px;
    }

    .summary {
        justify-self: end;
        margin: 16px 23px 0 0;
        font-size: 34px;
        font-weight: 700;
        line-height: 32px;
        white-space: nowrap;
    }
</style>
